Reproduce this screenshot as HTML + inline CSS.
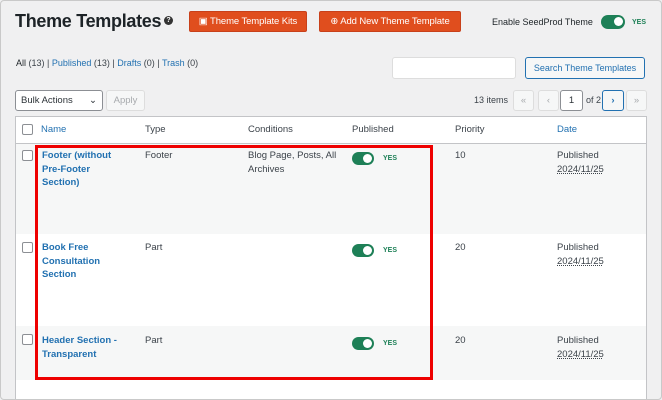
<!DOCTYPE html><html><head><style>
*{box-sizing:border-box;margin:0;padding:0}
html,body{width:662px;height:400px;overflow:hidden}
body{background:#f0f0f1;font-family:"Liberation Sans",sans-serif;font-size:9.5px;color:#3c434a;position:relative}
.frame{position:absolute;left:0;top:0;width:662px;height:400px;border:1px solid #c9c9c9;border-radius:4px}
.a{position:absolute;white-space:nowrap}
.btn{position:absolute;background:#e04e1e;color:#fff;border:1px solid #c8401a;border-radius:2px;font-size:9.5px;height:21px;line-height:19px;text-align:center;white-space:nowrap;letter-spacing:-0.1px}
.tog{position:absolute;width:22px;height:13px;border-radius:7px;background:#1e8057}
.tog:after{content:"";position:absolute;right:2px;top:2px;width:9px;height:9px;border-radius:50%;background:#fff}
.yes{position:absolute;color:#1e8057;font-weight:bold;font-size:7px}
.link{color:#2271b1}
.box{position:absolute;border:1px solid #8c8f94;border-radius:3px;background:#fff;white-space:nowrap}
.cb{position:absolute;width:11px;height:11px;border:1px solid #8c8f94;border-radius:2px;background:#fff}
.nm{position:absolute;color:#2271b1;font-weight:bold;font-size:9.5px;line-height:13.5px;white-space:nowrap}
.t{position:absolute;font-size:9.5px;line-height:13.5px;white-space:nowrap}
.dt{text-decoration:underline dotted}
</style></head><body>
<div class="a" style="left:15px;top:11px;font-size:18px;font-weight:bold;color:#1d2327;letter-spacing:-0.3px">Theme Templates</div>
<div class="a" style="left:164px;top:16px;width:9px;height:9px;border-radius:50%;background:#333;color:#fff;font-size:7px;text-align:center;line-height:9px;font-weight:bold">?</div>
<div class="btn" style="left:189px;top:11px;width:118px">▣ Theme Template Kits</div>
<div class="btn" style="left:319px;top:11px;width:142px">⊕ Add New Theme Template</div>
<div class="a" style="left:492px;top:17px;font-size:9px;color:#1d2327">Enable SeedProd Theme</div>
<div class="tog" style="left:601px;top:15px;width:24px;height:14px"></div>
<div class="yes" style="left:632px;top:19px">YES</div>
<div class="a" style="left:16px;top:58px;font-size:9px"><span style="color:#1d2327">All</span> (13) | <span class="link">Published</span> (13) | <span class="link">Drafts</span> (0) | <span class="link">Trash</span> (0)</div>
<div class="box" style="left:392px;top:57px;width:124px;height:22px;border-color:#ddd"></div>
<div class="box" style="left:525px;top:57px;width:120px;height:22px;border-color:#2271b1;background:#f6f7f7;color:#2271b1;font-size:9px;text-align:center;line-height:20px">Search Theme Templates</div>
<div class="box" style="left:15px;top:90px;width:88px;height:21px;padding-left:5px;line-height:19px;font-size:9.5px;color:#2c3338">Bulk Actions<span style="position:absolute;right:5px">⌄</span></div>
<div class="box" style="left:106px;top:90px;width:39px;height:21px;border-color:#ddd;background:#f6f7f7;color:#a7aaad;text-align:center;line-height:19px">Apply</div>
<div class="a" style="left:474px;top:95px;font-size:9px">13 items</div>
<div class="box" style="left:513px;top:90px;width:21px;height:21px;border-color:#ddd;background:#f6f7f7;color:#a7aaad;text-align:center;line-height:19px">«</div>
<div class="box" style="left:538px;top:90px;width:21px;height:21px;border-color:#ddd;background:#f6f7f7;color:#a7aaad;text-align:center;line-height:19px">‹</div>
<div class="box" style="left:560px;top:90px;width:23px;height:21px;text-align:center;line-height:19px;color:#2c3338">1</div>
<div class="a" style="left:586px;top:95px;font-size:9px">of 2</div>
<div class="box" style="left:602px;top:90px;width:22px;height:21px;border-color:#2271b1;background:#f6f7f7;color:#2271b1;text-align:center;line-height:19px;font-weight:bold">›</div>
<div class="box" style="left:626px;top:90px;width:21px;height:21px;border-color:#ddd;background:#f6f7f7;color:#a7aaad;text-align:center;line-height:19px">»</div>
<div style="position:absolute;left:15px;top:116px;width:632px;height:300px;background:#fff;border:1px solid #c3c4c7"></div>
<div style="position:absolute;left:16px;top:143px;width:630px;height:1px;background:#c3c4c7"></div>
<div style="position:absolute;left:16px;top:144px;width:630px;height:90px;background:#f6f7f7"></div>
<div style="position:absolute;left:16px;top:326px;width:630px;height:54px;background:#f6f7f7"></div>
<div class="cb" style="left:22px;top:124px"></div>
<div class="t link" style="left:41px;top:123px">Name</div>
<div class="t" style="left:145px;top:123px">Type</div>
<div class="t" style="left:248px;top:123px">Conditions</div>
<div class="t" style="left:352px;top:123px">Published</div>
<div class="t" style="left:455px;top:123px">Priority</div>
<div class="t link" style="left:557px;top:123px">Date</div>

<div class="cb" style="left:22px;top:150px"></div>
<div class="nm" style="left:42px;top:149px">Footer (without<br>Pre-Footer<br>Section)</div>
<div class="t" style="left:145px;top:149px">Footer</div>
<div class="t" style="left:248px;top:149px">Blog Page, Posts, All<br>Archives</div>
<div class="tog" style="left:352px;top:152px"></div><div class="yes" style="left:383px;top:155px">YES</div>
<div class="t" style="left:455px;top:149px">10</div>
<div class="t" style="left:557px;top:149px">Published<br><span class="dt">2024/11/25</span></div>

<div class="cb" style="left:22px;top:242px"></div>
<div class="nm" style="left:42px;top:241px">Book Free<br>Consultation<br>Section</div>
<div class="t" style="left:145px;top:241px">Part</div>
<div class="tog" style="left:352px;top:244px"></div><div class="yes" style="left:383px;top:247px">YES</div>
<div class="t" style="left:455px;top:241px">20</div>
<div class="t" style="left:557px;top:241px">Published<br><span class="dt">2024/11/25</span></div>

<div class="cb" style="left:22px;top:334px"></div>
<div class="nm" style="left:42px;top:334px">Header Section -<br>Transparent</div>
<div class="t" style="left:145px;top:334px">Part</div>
<div class="tog" style="left:352px;top:337px"></div><div class="yes" style="left:383px;top:340px">YES</div>
<div class="t" style="left:455px;top:334px">20</div>
<div class="t" style="left:557px;top:334px">Published<br><span class="dt">2024/11/25</span></div>

<div style="position:absolute;left:35px;top:145px;width:398px;height:235px;border:3px solid #ee0000"></div>
<div class="frame"></div>
</body></html>
